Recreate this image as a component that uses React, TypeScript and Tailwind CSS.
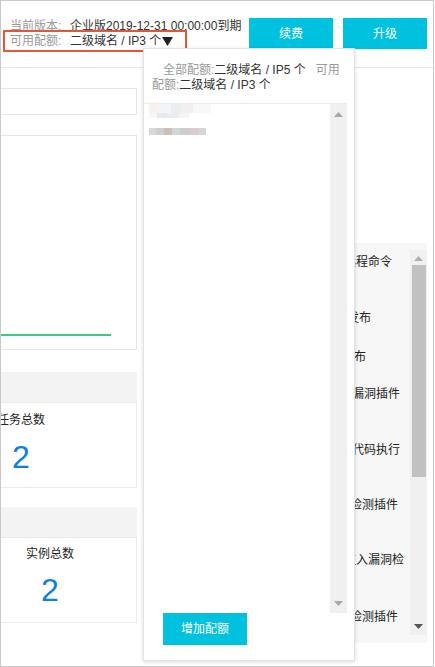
const font = { fontFamily: '"Liberation Sans", "Noto Sans CJK SC", sans-serif' };

const rightItems = [
  { text: "远程命令", ml: "ml-[194px]", mt: "mt-[11px]" },
  { text: "发布", ml: "ml-[197px]", mt: "mt-[40px]" },
  { text: "发布", ml: "ml-[192px]", mt: "mt-[23px]" },
  { text: "入漏洞插件", ml: "ml-[190px]", mt: "mt-[21px]" },
  { text: "令代码执行", ml: "ml-[190px]", mt: "mt-[40px]" },
  { text: "件检测插件", ml: "ml-[188px]", mt: "mt-[39px]" },
  { text: "注入漏洞检", ml: "ml-[194px]", mt: "mt-[39px]" },
  { text: "件检测插件", ml: "ml-[188px]", mt: "mt-[41px]" },
];

function ScrollArrow({ down, color }: { down?: boolean; color: string }) {
  return (
    <svg width="9" height="5" viewBox="0 0 9 5" className="mx-auto">
      <path d={down ? "M0 0h9L4.5 5z" : "M0 5h9L4.5 0z"} fill={color} />
    </svg>
  );
}

export default function App() {
  return (
    <div
      className="relative w-[434px] h-[667px] overflow-hidden border border-[#c9c9c9] bg-white text-[12px] text-[#333]"
      style={font}
    >
      {/* header */}
      <div className="flex h-[67px] items-start border-b border-[#e6e6e6]">
        <div className="pl-[9px] pt-[18px] leading-[15px] whitespace-nowrap">
          <div>
            <span className="inline-block w-[60px] text-[#999]">当前版本:</span>
            <span>企业版2019-12-31 00:00:00到期</span>
          </div>
          <div className="flex items-center">
            <span className="inline-block w-[60px] text-[#999]">可用配额:</span>
            <span>二级域名 / IP3 个</span>
            <svg width="11" height="9" viewBox="0 0 11 9" className="ml-[1px]">
              <path d="M0 0h11L5.5 9z" fill="#222" />
            </svg>
          </div>
        </div>
        <div className="ml-auto mr-[6px] mt-[17px] flex gap-[10px]">
          <button className="h-[31px] w-[84px] bg-[#00c1de] text-[12px] text-white">续费</button>
          <button className="h-[31px] w-[84px] bg-[#00c1de] text-[12px] text-white">升级</button>
        </div>
      </div>

      {/* red annotation */}
      <div className="absolute left-[2px] top-[29px] h-[22px] w-[184px] border-2 border-[#e5553a]" />

      {/* body */}
      <div className="flex">
        <div className="w-[136px]">
          <div className="mt-[20px] h-[27px] border border-l-0 border-[#e6e6e6]" />
          <div className="mt-[20px] flex h-[215px] flex-col justify-end border border-l-0 border-[#e6e6e6] pb-[13px]">
            <div className="h-[2px] w-[110px] bg-[#3cc98c]" />
          </div>
          <div className="mt-[22px] h-[30px] bg-[#f3f3f3]" />
          <div className="h-[86px] border border-l-0 border-[#ebebeb] overflow-hidden">
            <div className="-ml-[32px] w-[104px] text-center">
              <div className="mt-[9px] leading-[16px] text-[#222]">任务总数</div>
              <div className="mt-[11px] text-[32px] leading-[36px] text-[#0d7fe2]">2</div>
            </div>
          </div>
          <div className="mt-[19px] h-[30px] bg-[#f3f3f3]" />
          <div className="h-[86px] border border-l-0 border-[#ebebeb]">
            <div className="w-[98px] text-center">
              <div className="mt-[8px] leading-[16px] text-[#222]">实例总数</div>
              <div className="mt-[10px] text-[32px] leading-[36px] text-[#0d7fe2]">2</div>
            </div>
          </div>
        </div>

        <div className="ml-[13px] w-[277px]">
          <div className="relative mt-[175px] flex h-[400px] bg-[#f7f7f7]">
            <div className="flex-1 overflow-hidden">
              {rightItems.map((it, i) => (
                <div key={i} className={`${it.ml} ${it.mt} whitespace-nowrap leading-[16px] text-[#222]`}>
                  {it.text}
                </div>
              ))}
            </div>
            <div className="mt-[7px] flex h-[385px] w-[17px] flex-col bg-[#f0f0f0]">
              <div className="pt-[6px]"><ScrollArrow color="#b0b0b0" /></div>
              <div className="mx-auto mt-[4px] h-[212px] w-[14px] bg-[#c1c1c1]" />
              <div className="mt-auto pb-[6px]"><ScrollArrow down color="#555" /></div>
            </div>
          </div>
        </div>
      </div>

      {/* dropdown */}
      <div className="absolute left-[142px] top-[47px] flex h-[613px] w-[212px] flex-col border border-[#e3e3e3] bg-white shadow-[0_1px_4px_rgba(0,0,0,0.15)]">
        <div className="px-[8px] pt-[14px] leading-[15px] whitespace-nowrap">
          <div className="pl-[11px]">
            <span className="text-[#999]">全部配额:</span>
            <span>二级域名 / IP5 个</span>
            <span className="ml-[10px] text-[#999]">可用</span>
          </div>
          <div>
            <span className="text-[#999]">配额:</span>
            <span>二级域名 / IP3 个</span>
          </div>
        </div>
        <div className="mr-[7px] mt-[10px] flex h-[510px] border-t border-[#ebebeb]">
          <div className="flex-1 pl-[5px]">
            <div className="flex h-[9px]">
              <div className="w-[8px] bg-[#f8f2ee]" />
              <div className="w-[14px] bg-[#f2f4f6]" />
              <div className="w-[10px] bg-[#e9eef2]" />
              <div className="w-[12px] bg-[#f0f0f0]" />
              <div className="w-[18px] bg-[#f8f8f8]" />
            </div>
            <div className="flex h-[5px]">
              <div className="w-[8px] bg-[#fbf6f2]" />
              <div className="w-[10px] bg-[#e3ebf1]" />
              <div className="w-[12px] bg-[#ececec]" />
              <div className="w-[10px] bg-[#f4f4f4]" />
            </div>
            <div className="mt-[10px] flex h-[7px]">
              <div className="w-[7px] bg-[#d8d8d8]" />
              <div className="w-[8px] bg-[#cfcfcf]" />
              <div className="w-[8px] bg-[#cbbfb8]" />
              <div className="w-[8px] bg-[#d0d6d9]" />
              <div className="w-[10px] bg-[#cdcdcd]" />
              <div className="w-[8px] bg-[#d5ccd6]" />
              <div className="w-[8px] bg-[#d6d6d6]" />
            </div>
          </div>
          <div className="flex w-[17px] flex-col bg-[#f0f0f0]">
            <div className="pt-[8px]"><ScrollArrow color="#a8a8a8" /></div>
            <div className="mt-auto pb-[7px]"><ScrollArrow down color="#a8a8a8" /></div>
          </div>
        </div>
        <button className="ml-[19px] h-[32px] w-[84px] bg-[#00c1de] text-[12px] text-white">增加配额</button>
      </div>
    </div>
  );
}
